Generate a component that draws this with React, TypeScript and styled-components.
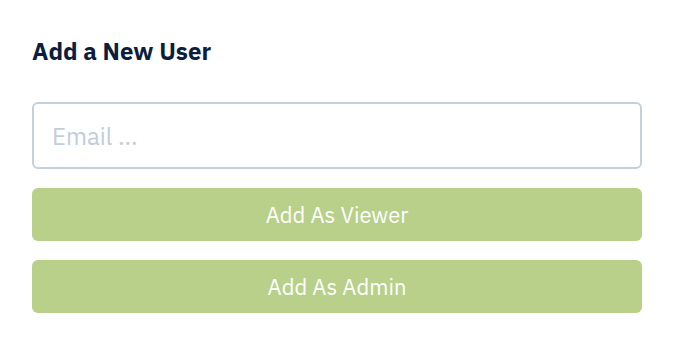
import React from "react";
import styled, { createGlobalStyle } from "styled-components";

const Global = createGlobalStyle`
  html, body { margin: 0; padding: 0; background: #ffffff; }
  body { font-family: "IBM Plex Sans", Inter, "Noto Sans", sans-serif; }
`;

const Panel = styled.div`
  width: 610px;
  padding: 36px 0 0 32px;
  display: flex;
  flex-direction: column;
`;

const Title = styled.h2`
  margin: 0 0 36px;
  font-size: 24px;
  line-height: 30px;
  font-weight: 700;
  color: #0c1d3d;
`;

const Input = styled.input`
  box-sizing: border-box;
  width: 100%;
  height: 67px;
  border: 2px solid #c5d0dd;
  border-radius: 6px;
  padding: 0 18px;
  font-family: inherit;
  font-size: 24px;
  color: #0c1d3d;
  outline: none;
  margin-bottom: 19px;
  &::placeholder { color: #c2cddb; }
`;

const Buttons = styled.div`
  display: flex;
  flex-direction: column;
  gap: 19px;
`;

const Button = styled.button`
  height: 53px;
  width: 100%;
  border: none;
  border-radius: 6px;
  background: #b8d08a;
  color: #ffffff;
  font-family: inherit;
  font-size: 22px;
  font-weight: 400;
  cursor: pointer;
`;

export default function App() {
  return (
    <>
      <Global />
      <Panel>
        <Title>Add a New User</Title>
        <Input placeholder="Email ..." />
        <Buttons>
          <Button>Add As Viewer</Button>
          <Button>Add As Admin</Button>
        </Buttons>
      </Panel>
    </>
  );
}
